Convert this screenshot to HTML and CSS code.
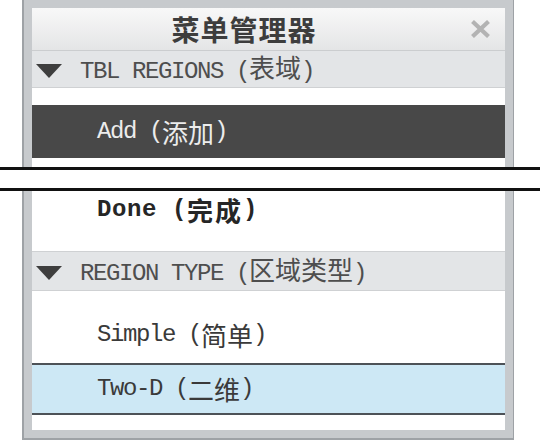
FILE: index.html
```html
<!DOCTYPE html>
<html lang="zh-CN">
<head>
  <meta charset="UTF-8" />
  <title>菜单管理器</title>
  <link rel="stylesheet" href="styles.css">
</head>
<body>
  <div class="frame frame-top">
    <div class="panel">
      <div class="titlebar">
        <div class="title">菜单管理器</div>
        <div class="close">
          <svg width="19" height="18" viewBox="0 0 19 18">
            <path d="M1.5 1.5 L17.5 16.5 M17.5 1.5 L1.5 16.5" stroke="#b3b3b3" stroke-width="4.2" fill="none" />
          </svg>
        </div>
      </div>

      <div class="group-head">
        <svg class="caret" width="26" height="14" viewBox="0 0 26 14">
          <polygon points="0,0 26,0 13,14" fill="#3e3e3e" />
        </svg>
        <span class="label">TBL REGIONS (<span class="zh">表域</span>)</span>
      </div>
      <div class="spacer spacer-top"></div>
      <div class="item item-active">Add (<span class="zh">添加</span>)</div>
      <div class="spacer spacer-cut"></div>
    </div>
  </div>

  <div class="cut"></div>

  <div class="frame frame-bottom">
    <div class="panel">
      <div class="item item-done">Done (<span class="zh">完成</span>)</div>

      <div class="group-head group-head-second">
        <svg class="caret" width="26" height="14" viewBox="0 0 26 14">
          <polygon points="0,0 26,0 13,14" fill="#3e3e3e" />
        </svg>
        <span class="label">REGION TYPE (<span class="zh">区域类型</span>)</span>
      </div>
      <div class="item item-simple">Simple (<span class="zh">简单</span>)</div>
      <div class="item item-selected">Two-D (<span class="zh">二维</span>)</div>
      <div class="spacer spacer-end"></div>
    </div>
  </div>
</body>
</html>
```

FILE: styles.css
```css
body {
  margin: 0;
  padding: 0;
  background-color: #ffffff;
  font-family: "Liberation Mono", "Noto Sans CJK SC", monospace;
}

.frame {
  margin-left: 22px;
  width: 473px;
  background-color: #c7cacd;
  border-left: 2px solid #9ea2a6;
  border-right: 1px solid #9ea2a6;
  padding: 0 8px;
}

.frame-top {
  padding-top: 8px;
}

.frame-bottom {
  padding-bottom: 8px;
  border-bottom: 2px solid #9ea2a6;
}

.panel {
  background-color: #ffffff;
}

.zh {
  font-family: "Noto Sans CJK SC", sans-serif;
  font-size: 26px;
  letter-spacing: 0;
}

.titlebar {
  display: flex;
  align-items: center;
  height: 42px;
  background: linear-gradient(to bottom, #f8f8f8, #e4e5e6);
  border-bottom: 1px solid #cbcdcf;
}

.title {
  flex: 1;
  text-align: center;
  font-family: "Noto Sans CJK SC", sans-serif;
  font-size: 28px;
  font-weight: bold;
  letter-spacing: 1px;
  color: #3d3d3d;
  line-height: 42px;
}

.close {
  width: 49px;
  display: flex;
  justify-content: center;
  align-items: center;
}

.group-head {
  display: flex;
  align-items: center;
  height: 36px;
  padding-left: 4px;
  background-color: #e3e5e7;
  border-bottom: 1px solid #cfd1d3;
  color: #4e4e4e;
  font-size: 24px;
  letter-spacing: -1.4px;
  line-height: 26px;
}

.group-head-second {
  height: 38px;
  border-top: 1px solid #cfd1d3;
}

.caret {
  margin-top: 3px;
  margin-right: 18px;
  flex-shrink: 0;
}

.spacer-top {
  height: 17px;
}

.spacer-cut {
  height: 9px;
}

.spacer-end {
  height: 15px;
}

.item {
  display: flex;
  align-items: center;
  padding-left: 65px;
  font-size: 24px;
  letter-spacing: -1.4px;
  line-height: 26px;
  color: #3a3a3a;
  white-space: pre;
}

.item-active {
  height: 53px;
  background-color: #484848;
  color: #ececec;
}

.item-done {
  height: 26px;
  padding-top: 6px;
  padding-bottom: 28px;
  font-weight: bold;
  letter-spacing: 0.6px;
  color: #262626;
}

.item-done .zh {
  letter-spacing: 2px;
}

.item-simple {
  height: 26px;
  padding-top: 31px;
  padding-bottom: 15px;
}

.item-selected {
  height: 48px;
  background-color: #cde8f5;
  border-top: 2px solid #4d5257;
  border-bottom: 2px solid #4d5257;
}

.cut {
  height: 18px;
  border-top: 3px solid #111111;
  border-bottom: 3px solid #111111;
  background-color: #ffffff;
}
```
